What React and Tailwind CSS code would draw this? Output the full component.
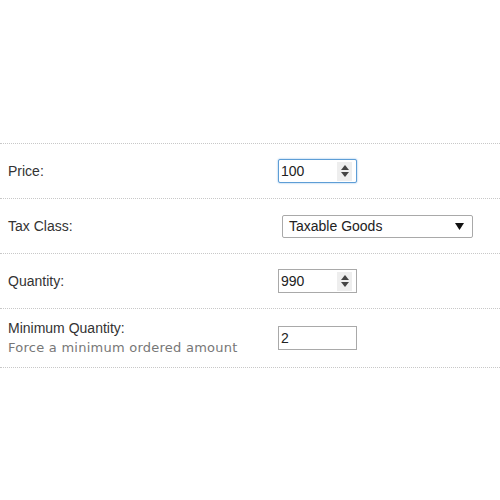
import { useState } from 'react'

// Ligne du formulaire produit : libellé à gauche, champ à droite
function Row({ label, hint, children, tall }) {
  return (
    <div className={`flex items-center border-b border-dotted border-[#c8c8c8] ${tall ? 'h-[59px]' : 'h-[55px]'}`}>
      <div className="w-[278px] pl-[8px]">
        <p className="text-[14px] leading-[19px] text-[#333]">{label}</p>
        {hint && (
          <p className="text-[13px] leading-[19px] text-[#777] font-['DejaVu_Sans',sans-serif] tracking-[0.25px]">{hint}</p>
        )}
      </div>
      {children}
    </div>
  )
}

function Spinner() {
  return (
    <div className="flex flex-col items-center justify-center w-[15px] h-[19px] bg-[#eeeeee] mr-[4px] gap-[2px]">
      <svg width="8" height="5" viewBox="0 0 8 5"><path d="M0 5 L4 0 L8 5 Z" fill="#444" /></svg>
      <svg width="8" height="5" viewBox="0 0 8 5"><path d="M0 0 L4 5 L8 0 Z" fill="#444" /></svg>
    </div>
  )
}

function NumberBox({ value, focused, spinner = true }) {
  return (
    <div
      className={`flex items-center justify-between w-[79px] h-[24px] bg-white border ${
        focused ? 'border-[#5e9ed6] shadow-[0_0_2px_#7fb2e5] rounded-[2px]' : 'border-[#a9a9a9]'
      }`}>
      <span className="pl-[2px] text-[14px] text-[#222]">{value}</span>
      {spinner && <Spinner />}
    </div>
  )
}

export default function App() {
  const [tax] = useState('Taxable Goods')

  return (
    <div className="w-[500px] h-[500px] bg-white font-['Liberation_Sans',Arial,sans-serif]">
      <div className="pt-[143px]">
        <div className="border-t border-dotted border-[#c8c8c8]">
          <Row label="Price:">
            <NumberBox value="100" focused />
          </Row>
          <Row label="Tax Class:">
            <div className="ml-[4px] flex items-center justify-between w-[191px] h-[23px] border border-[#a9a9a9] rounded-[2px] bg-white">
              <span className="pl-[6px] text-[14px] text-[#222]">{tax}</span>
              <svg width="9" height="7" viewBox="0 0 9 7" className="mr-[8px]"><path d="M0 0 L9 0 L4.5 7 Z" fill="#111" /></svg>
            </div>
          </Row>
          <Row label="Quantity:">
            <NumberBox value="990" />
          </Row>
          <Row label="Minimum Quantity:" hint="Force a minimum ordered amount" tall>
            <NumberBox value="2" spinner={false} />
          </Row>
        </div>
      </div>
    </div>
  )
}
